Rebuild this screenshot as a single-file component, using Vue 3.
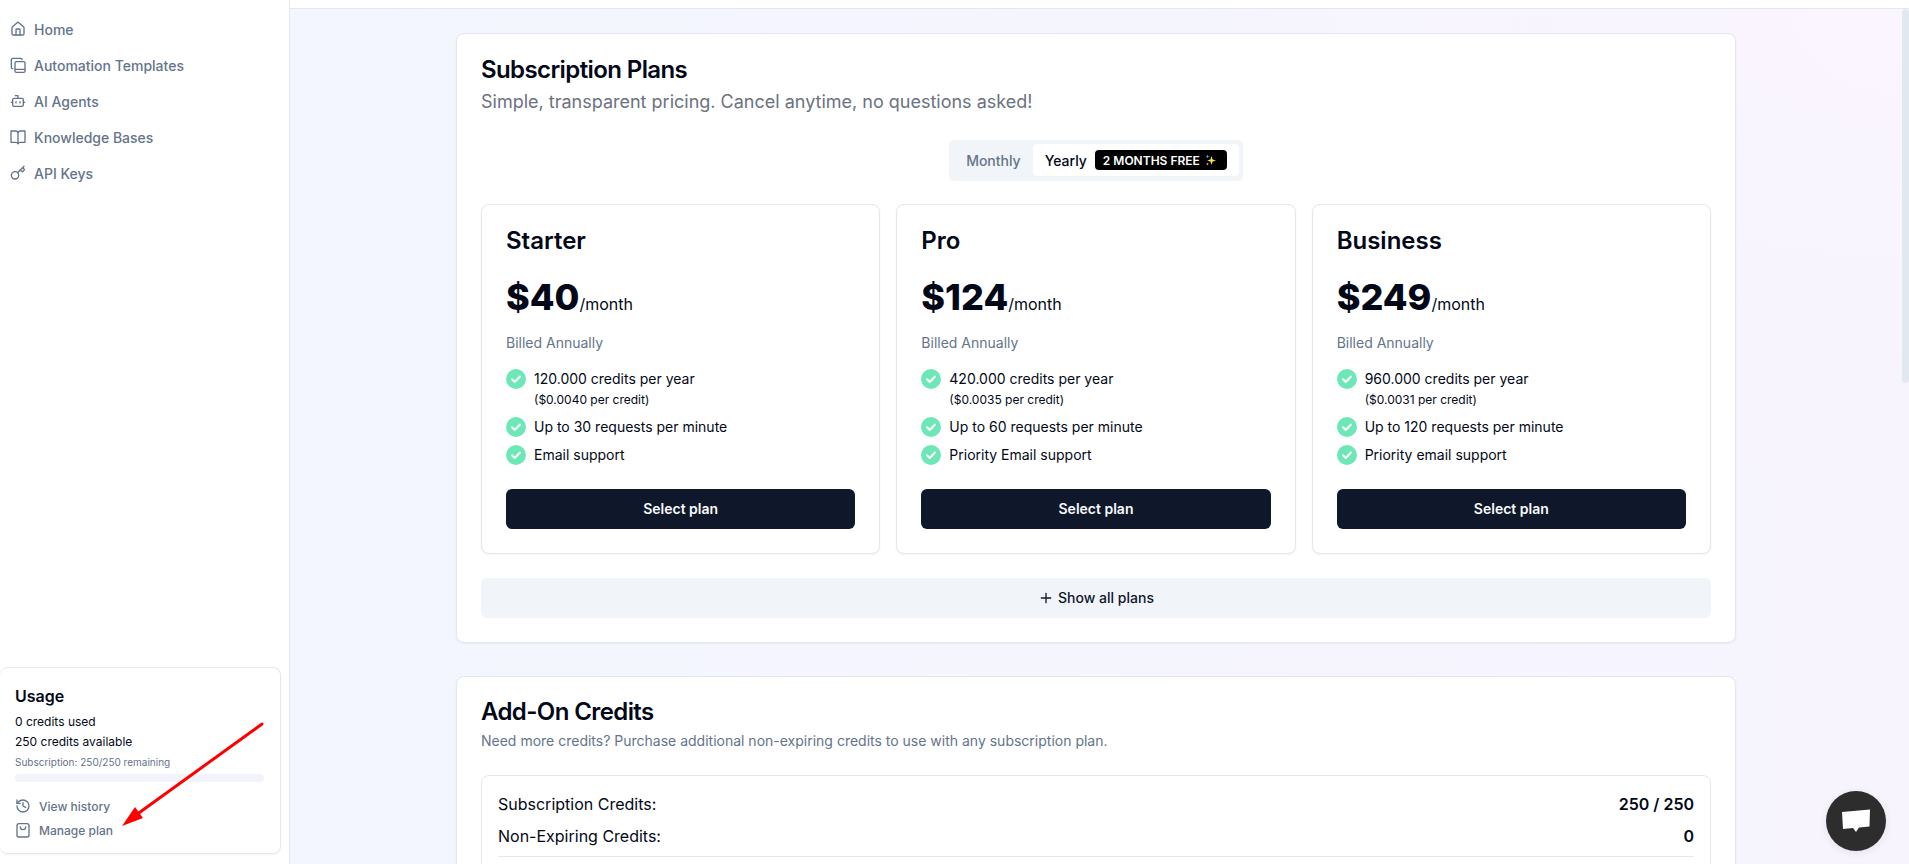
<script setup>
const navItems = [
  { label: 'Home', icon: 'home' },
  { label: 'Automation Templates', icon: 'templates' },
  { label: 'AI Agents', icon: 'bot' },
  { label: 'Knowledge Bases', icon: 'book' },
  { label: 'API Keys', icon: 'key' },
]
const plans = [
  { name: 'Starter', price: '$40', credits: '120.000', rate: '$0.0040', requests: 30, support: 'Email support' },
  { name: 'Pro', price: '$124', credits: '420.000', rate: '$0.0035', requests: 60, support: 'Priority Email support' },
  { name: 'Business', price: '$249', credits: '960.000', rate: '$0.0031', requests: 120, support: 'Priority email support' },
]
</script>

<template>
  <div class="app">
    <aside class="sidebar">
      <nav class="nav">
        <a v-for="item in navItems" :key="item.label" class="nav-item">
          <svg class="nav-icon" viewBox="0 0 24 24">
            <template v-if="item.icon === 'home'">
              <path d="M15 21v-8a1 1 0 0 0-1-1h-4a1 1 0 0 0-1 1v8" />
              <path d="M3 10a2 2 0 0 1 .709-1.528l7-5.999a2 2 0 0 1 2.582 0l7 5.999A2 2 0 0 1 21 10v9a2 2 0 0 1-2 2H5a2 2 0 0 1-2-2z" />
            </template>
            <template v-else-if="item.icon === 'templates'">
              <path d="M4 17.500A2 2 0 0 1 2 16V4a2 2 0 0 1 2-2h12a2 2 0 0 1 2 2" />
              <rect x="7.500" y="7" width="15" height="16" rx="2" />
              <path d="M7.500 18.500h15" />
            </template>
            <template v-else-if="item.icon === 'bot'">
              <path d="M12 8V4H8" />
              <rect x="4" y="8" width="16" height="12" rx="2" />
              <path d="M2 14h2M20 14h2M15 13v2M9 13v2" />
            </template>
            <template v-else-if="item.icon === 'book'">
              <path d="M12 5v17" />
              <path d="M1.500 3H8a4 4 0 0 1 4 2 4 4 0 0 1 4-2h6.500v17H15a4 4 0 0 0-3 2 4 4 0 0 0-3-2H1.500z" />
            </template>
            <template v-else>
              <path d="m15.500 7.500 2.300 2.300a1 1 0 0 0 1.400 0l2.100-2.100a1 1 0 0 0 0-1.400L19 4" />
              <path d="m21 2-9.600 9.600" />
              <circle cx="7.500" cy="15.500" r="5.500" />
            </template>
          </svg>
          <span>{{ item.label }}</span>
        </a>
      </nav>

      <section class="usage">
        <h3 class="usage-title">Usage</h3>
        <p class="usage-line">0 credits used</p>
        <p class="usage-line">250 credits available</p>
        <p class="usage-note">Subscription: 250/250 remaining</p>
        <div class="progress"></div>
        <a class="usage-link">
          <svg class="usage-icon" viewBox="0 0 24 24">
            <path d="M3 12a9 9 0 1 0 9-9 9.750 9.750 0 0 0-6.740 2.740L3 8" />
            <path d="M3 3v5h5" />
            <path d="M12 7v5l4 2" />
          </svg>
          <span>View history</span>
        </a>
        <a class="usage-link">
          <svg class="usage-icon" viewBox="0 0 24 24">
            <rect x="3" y="2.500" width="18" height="20" rx="3" />
            <path d="M8 7.500a4 4 0 0 0 8 0" />
          </svg>
          <span>Manage plan</span>
        </a>
      </section>
    </aside>

    <main class="main">
      <div class="topbar"></div>
      <div class="body">
        <div class="content">
          <section class="panel">
            <h2 class="panel-title">Subscription Plans</h2>
            <p class="panel-sub">Simple, transparent pricing. Cancel anytime, no questions asked!</p>

            <div class="toggle-row">
              <div class="toggle">
                <span class="toggle-off">Monthly</span>
                <span class="toggle-on">
                  Yearly
                  <span class="badge">
                    2 MONTHS FREE
                    <svg class="sparkle" viewBox="0 0 12 12">
                      <path class="sp-y" d="M6.500 2 7.600 5.400 11 6.500 7.600 7.600 6.500 11 5.400 7.600 2 6.500 5.400 5.400z" />
                      <path class="sp-b" d="M2.500 .5 3 2 4.500 2.500 3 3 2.500 4.500 2 3 .5 2.500 2 2z" />
                      <path class="sp-p" d="M2.500 8.500 2.900 9.600 4 10 2.900 10.400 2.500 11.500 2.100 10.400 1 10 2.100 9.600z" />
                    </svg>
                  </span>
                </span>
              </div>
            </div>

            <div class="plans">
              <article v-for="plan in plans" :key="plan.name" class="plan">
                <h3 class="plan-name">{{ plan.name }}</h3>
                <div class="price"><strong>{{ plan.price }}</strong><span>/month</span></div>
                <p class="billed">Billed Annually</p>
                <ul class="features">
                  <li>
                    <svg class="check" viewBox="0 0 20 20"><circle cx="10" cy="10" r="10" /><path d="m6 10.300 2.700 2.700L14 7.500" /></svg>
                    <div>
                      <div>{{ plan.credits }} credits per year</div>
                      <div class="rate">({{ plan.rate }} per credit)</div>
                    </div>
                  </li>
                  <li>
                    <svg class="check" viewBox="0 0 20 20"><circle cx="10" cy="10" r="10" /><path d="m6 10.300 2.700 2.700L14 7.500" /></svg>
                    <div>Up to {{ plan.requests }} requests per minute</div>
                  </li>
                  <li>
                    <svg class="check" viewBox="0 0 20 20"><circle cx="10" cy="10" r="10" /><path d="m6 10.300 2.700 2.700L14 7.500" /></svg>
                    <div>{{ plan.support }}</div>
                  </li>
                </ul>
                <button class="select"><span>Select plan</span></button>
              </article>
            </div>

            <button class="show-all">
              <svg class="plus" viewBox="0 0 24 24"><path d="M5 12h14M12 5v14" /></svg>
              Show all plans
            </button>
          </section>

          <section class="panel addon">
            <h2 class="panel-title">Add-On Credits</h2>
            <p class="addon-sub">Need more credits? Purchase additional non-expiring credits to use with any subscription plan.</p>
            <div class="balance">
              <div class="balance-row"><span>Subscription Credits:</span><b>250 / 250</b></div>
              <div class="balance-row"><span>Non-Expiring Credits:</span><b>0</b></div>
              <div class="balance-rule"></div>
            </div>
          </section>
        </div>
        <div class="scrollbar"><div class="thumb"></div></div>
      </div>
    </main>

    <svg class="annotation" viewBox="0 0 300 200">
      <path d="M262 8 136 99" />
      <polygon points="122,110 135,91 143,102" />
    </svg>

    <button class="chat" aria-label="Chat">
      <svg viewBox="0 0 30 26"><path d="M1 4 29 1.500 28.500 18.500 18 19.500 15 24 12 20 2 21z" /></svg>
    </button>
  </div>
</template>

<style>
html, body { margin: 0; height: 100%; overflow: hidden; }
</style>

<style scoped>
* { box-sizing: border-box; }
.app {
  position: relative;
  display: flex;
  width: 1909px;
  height: 864px;
  overflow: hidden;
  font-family: Inter, "Liberation Sans", sans-serif;
  color: #020817;
  background: #fff;
}
.sidebar {
  flex: 0 0 290px;
  display: flex;
  flex-direction: column;
  justify-content: space-between;
  border-right: 1px solid #e2e8f0;
  padding: 11px 8px 10px 0;
}
.nav { display: flex; flex-direction: column; }
.nav-item {
  display: flex;
  align-items: center;
  gap: 8px;
  height: 36px;
  padding-left: 10px;
  font-size: 14px;
  font-weight: 500;
  color: #64748b;
}
.nav-icon, .usage-icon, .plus {
  fill: none;
  stroke: currentColor;
  stroke-width: 2;
  stroke-linecap: round;
  stroke-linejoin: round;
}
.nav-icon { width: 16px; height: 16px; flex: none; }
.usage {
  height: 187px;
  border: 1px solid #e2e8f0;
  border-left-width: 0;
  border-radius: 8px;
  padding: 16px 16px 0 15px;
  box-shadow: 0 1px 2px rgba(0, 0, 0, .05);
}
.usage-title { margin: 0 0 4px; font-size: 16px; line-height: 24px; font-weight: 600; }
.usage-line { margin: 0; font-size: 12px; line-height: 20px; }
.usage-note { margin: 0; font-size: 10px; line-height: 20px; color: #64748b; }
.progress { height: 8px; margin: 2px 0 12px; border-radius: 4px; background: #f1f5f9; }
.usage-link {
  display: flex;
  align-items: center;
  gap: 8px;
  height: 24px;
  font-size: 12px;
  font-weight: 500;
  color: #64748b;
}
.usage-icon { width: 16px; height: 16px; flex: none; }
.main {
  flex: 1;
  min-width: 0;
  height: 864px;
  display: flex;
  flex-direction: column;
}
.topbar { flex: 0 0 9px; background: #fff; border-bottom: 1px solid #e2e8f0; }
.body {
  flex: 1;
  min-height: 0;
  display: flex;
  background:
    radial-gradient(ellipse 700px 500px at 100% 0, #faf5ff, rgba(250, 245, 255, 0)),
    linear-gradient(to right, #f3f6fe, #f7f4fe);
}
.content {
  flex: 1;
  min-width: 0;
  overflow: hidden;
  padding-top: 24px;
}
.scrollbar { flex: 0 0 7px; }
.thumb { height: 374px; border-radius: 4px; background: #e2e8f0; }
.panel {
  width: 1280px;
  margin: 0 auto;
  padding: 20px 24px 24px;
  background: #fff;
  border: 1px solid #e2e8f0;
  border-radius: 8px;
  box-shadow: 0 1px 2px rgba(0, 0, 0, .05);
}
.panel-title { margin: 0; font-size: 24px; line-height: 32px; font-weight: 600; letter-spacing: -.6px; }
.panel-sub { margin: 2px 0 0; font-size: 18px; line-height: 28px; color: #6b7280; }
.toggle-row { display: flex; justify-content: center; margin-top: 24px; }
.toggle {
  display: flex;
  align-items: center;
  height: 40px;
  padding: 4px;
  border-radius: 6px;
  background: #f1f5f9;
  box-shadow: 0 1px 2px rgba(0, 0, 0, .05);
  font-size: 14px;
  font-weight: 500;
}
.toggle-off { padding: 0 12px 0 13px; color: #64748b; }
.toggle-on {
  display: flex;
  align-items: center;
  gap: 8px;
  height: 32px;
  padding: 0 12px 0 12px;
  border-radius: 4px;
  background: #fff;
}
.badge {
  display: flex;
  align-items: center;
  gap: 5px;
  height: 20px;
  padding: 0 10px 0 8px;
  border-radius: 4px;
  background: #000;
  color: #fff;
  font-size: 12px;
  font-weight: 600;
}
.sparkle { width: 12px; height: 12px; }
.sp-y { fill: #fde047; }
.sp-b { fill: #38bdf8; }
.sp-p { fill: #f0abfc; }
.plans { display: grid; grid-template-columns: repeat(3, 1fr); gap: 16px; margin-top: 24px; }
.plan {
  padding: 24px;
  background: #fff;
  border: 1px solid #e2e8f0;
  border-radius: 8px;
  box-shadow: 0 1px 2px rgba(0, 0, 0, .05);
}
.plan-name { margin: 0; font-size: 24px; line-height: 24px; font-weight: 600; }
.price { display: flex; align-items: baseline; margin-top: 24px; height: 40px; }
.price strong { font-size: 36px; line-height: 40px; font-weight: 800; }
.price span { font-size: 16px; }
.billed { margin: 16px 0 0; font-size: 14px; line-height: 20px; color: #64748b; }
.features { list-style: none; margin: 16px 0 0; padding: 0; display: flex; flex-direction: column; gap: 8px; font-size: 14px; line-height: 20px; }
.features li { display: flex; gap: 8px; }
.check { width: 20px; height: 20px; flex: none; }
.check circle { fill: #6ee7b7; }
.check path { fill: none; stroke: #fff; stroke-width: 2; stroke-linecap: round; stroke-linejoin: round; }
.rate { font-size: 12px; line-height: 22px; height: 20px; }
.select {
  display: block;
  width: 100%;
  height: 40px;
  margin-top: 24px;
  padding: 0 0 1px;
  border: 0;
  border-radius: 6px;
  background: #0f172a;
  color: #f8fafc;
  font: 600 14px Inter, sans-serif;
}
.show-all {
  display: flex;
  align-items: center;
  justify-content: center;
  gap: 4px;
  width: 100%;
  height: 40px;
  margin-top: 24px;
  padding: 0 0 1px;
  border: 0;
  border-radius: 6px;
  background: #f1f5f9;
  color: #0f172a;
  font: 500 14px Inter, sans-serif;
}
.plus { width: 16px; height: 16px; }
.addon { margin-top: 33px; padding-top: 19px; }
.addon-sub { margin: 3px 0 0; font-size: 14px; line-height: 20px; color: #64748b; }
.balance { margin-top: 24px; padding: 16px; height: 400px; border: 1px solid #e2e8f0; border-radius: 8px; }
.balance-row { display: flex; justify-content: space-between; font-size: 16px; line-height: 24px; }
.balance-row + .balance-row { margin-top: 8px; }
.balance-row b { font-weight: 600; }
.balance-rule { height: 1px; margin-top: 8px; background: #e2e8f0; }
.annotation {
  position: absolute;
  left: 0;
  top: 716px;
  width: 300px;
  height: 200px;
  pointer-events: none;
}
.annotation path { fill: none; stroke: #f00; stroke-width: 3; stroke-linecap: round; }
.annotation polygon { fill: #f00; }
.chat {
  position: absolute;
  left: 1826px;
  top: 791px;
  width: 60px;
  height: 60px;
  padding: 0;
  border: 0;
  border-radius: 50%;
  background: #2d2d2d;
  box-shadow: 0 2px 8px rgba(0, 0, 0, .08);
  display: flex;
  align-items: center;
  justify-content: center;
}
.chat svg { width: 30px; height: 26px; fill: #fff; }
</style>
